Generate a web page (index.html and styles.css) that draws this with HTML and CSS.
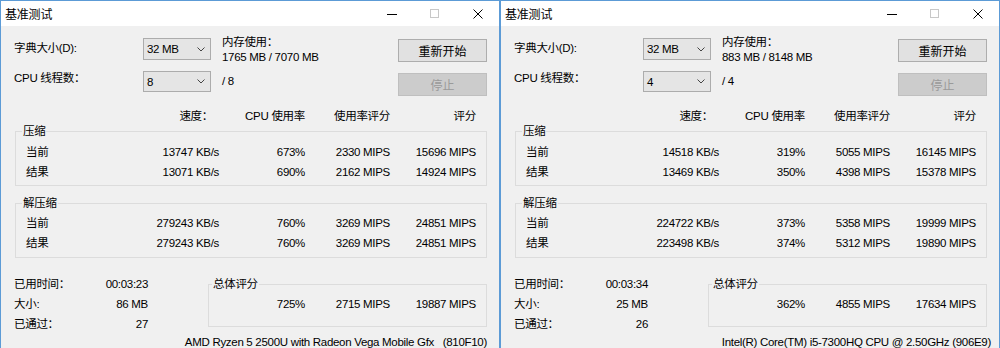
FILE: index.html
```html
<!DOCTYPE html>
<html lang="zh-CN">
<head>
    <meta charset="UTF-8">
    <title>基准测试</title>
    <link rel="stylesheet" href="styles.css">
</head>
<body>
<div class="desk">

    <section class="window">
        <header class="titlebar">
            <span class="title">基准测试</span>
            <div class="caption">
                <span class="cap"><svg width="10" height="10" viewBox="0 0 10 10"><line x1="0" y1="5.5" x2="10" y2="5.5" stroke="#000" stroke-width="1"/></svg></span>
                <span class="cap"><svg width="10" height="10" viewBox="0 0 10 10"><rect x="0.5" y="0.5" width="8" height="8" fill="none" stroke="#c8c8c8" stroke-width="1"/></svg></span>
                <span class="cap"><svg width="10" height="10" viewBox="0 0 10 10"><path d="M0.5 0.5 L9.5 9.5 M9.5 0.5 L0.5 9.5" stroke="#000" stroke-width="1"/></svg></span>
            </div>
        </header>
        <div class="client">
            <div class="settings">
                <span class="lbl lbl-dict">字典大小(D):</span>
                <div class="combo"><span>32 MB</span><svg width="8" height="5" viewBox="0 0 8 5"><polyline points="0.5,0.5 4,4 7.5,0.5" fill="none" stroke="#444" stroke-width="1"/></svg></div>
                <div class="mem"><div>内存使用：</div><div>1765 MB / 7070 MB</div></div>
                <button class="btn btn-restart">重新开始</button>

                <span class="lbl lbl-threads">CPU 线程数：</span>
                <div class="combo combo-threads"><span>8</span><svg width="8" height="5" viewBox="0 0 8 5"><polyline points="0.5,0.5 4,4 7.5,0.5" fill="none" stroke="#444" stroke-width="1"/></svg></div>
                <div class="threads">/ 8</div>
                <button class="btn btn-stop" disabled>停止</button>
            </div>

            <div class="cols head">
                <span></span><span class="speed-h">速度：</span><span>CPU 使用率</span><span>使用率评分</span><span>评分</span>
            </div>

            <fieldset class="group">
                <legend>压缩</legend>
                <div class="cols"><span>当前</span><span>13747 KB/s</span><span>673%</span><span>2330 MIPS</span><span>15696 MIPS</span></div>
                <div class="cols"><span>结果</span><span>13071 KB/s</span><span>690%</span><span>2162 MIPS</span><span>14924 MIPS</span></div>
            </fieldset>

            <fieldset class="group group-decomp">
                <legend>解压缩</legend>
                <div class="cols"><span>当前</span><span>279243 KB/s</span><span>760%</span><span>3269 MIPS</span><span>24851 MIPS</span></div>
                <div class="cols"><span>结果</span><span>279243 KB/s</span><span>760%</span><span>3269 MIPS</span><span>24851 MIPS</span></div>
            </fieldset>

            <div class="summary">
                <div class="stats">
                    <span>已用时间：</span><span class="num">00:03:23</span>
                    <span>大小:</span><span class="num">86 MB</span>
                    <span>已通过：</span><span class="num">27</span>
                </div>
                <fieldset class="group total">
                    <legend>总体评分</legend>
                    <div class="total-cols"><span>725%</span><span>2715 MIPS</span><span>19887 MIPS</span></div>
                </fieldset>
            </div>

            <div class="cpu-name">AMD Ryzen 5 2500U with Radeon Vega Mobile Gfx   (810F10)</div>
        </div>
    </section>

    <section class="window">
        <header class="titlebar">
            <span class="title">基准测试</span>
            <div class="caption">
                <span class="cap"><svg width="10" height="10" viewBox="0 0 10 10"><line x1="0" y1="5.5" x2="10" y2="5.5" stroke="#000" stroke-width="1"/></svg></span>
                <span class="cap"><svg width="10" height="10" viewBox="0 0 10 10"><rect x="0.5" y="0.5" width="8" height="8" fill="none" stroke="#c8c8c8" stroke-width="1"/></svg></span>
                <span class="cap"><svg width="10" height="10" viewBox="0 0 10 10"><path d="M0.5 0.5 L9.5 9.5 M9.5 0.5 L0.5 9.5" stroke="#000" stroke-width="1"/></svg></span>
            </div>
        </header>
        <div class="client">
            <div class="settings">
                <span class="lbl lbl-dict">字典大小(D):</span>
                <div class="combo"><span>32 MB</span><svg width="8" height="5" viewBox="0 0 8 5"><polyline points="0.5,0.5 4,4 7.5,0.5" fill="none" stroke="#444" stroke-width="1"/></svg></div>
                <div class="mem"><div>内存使用：</div><div>883 MB / 8148 MB</div></div>
                <button class="btn btn-restart">重新开始</button>

                <span class="lbl lbl-threads">CPU 线程数：</span>
                <div class="combo combo-threads"><span>4</span><svg width="8" height="5" viewBox="0 0 8 5"><polyline points="0.5,0.5 4,4 7.5,0.5" fill="none" stroke="#444" stroke-width="1"/></svg></div>
                <div class="threads">/ 4</div>
                <button class="btn btn-stop" disabled>停止</button>
            </div>

            <div class="cols head">
                <span></span><span class="speed-h">速度：</span><span>CPU 使用率</span><span>使用率评分</span><span>评分</span>
            </div>

            <fieldset class="group">
                <legend>压缩</legend>
                <div class="cols"><span>当前</span><span>14518 KB/s</span><span>319%</span><span>5055 MIPS</span><span>16145 MIPS</span></div>
                <div class="cols"><span>结果</span><span>13469 KB/s</span><span>350%</span><span>4398 MIPS</span><span>15378 MIPS</span></div>
            </fieldset>

            <fieldset class="group group-decomp">
                <legend>解压缩</legend>
                <div class="cols"><span>当前</span><span>224722 KB/s</span><span>373%</span><span>5358 MIPS</span><span>19999 MIPS</span></div>
                <div class="cols"><span>结果</span><span>223498 KB/s</span><span>374%</span><span>5312 MIPS</span><span>19890 MIPS</span></div>
            </fieldset>

            <div class="summary">
                <div class="stats">
                    <span>已用时间：</span><span class="num">00:03:34</span>
                    <span>大小:</span><span class="num">25 MB</span>
                    <span>已通过：</span><span class="num">26</span>
                </div>
                <fieldset class="group total">
                    <legend>总体评分</legend>
                    <div class="total-cols"><span>362%</span><span>4855 MIPS</span><span>17634 MIPS</span></div>
                </fieldset>
            </div>

            <div class="cpu-name cpu-intel">Intel(R) Core(TM) i5-7300HQ CPU @ 2.50GHz (906E9)</div>
        </div>
    </section>

</div>
</body>
</html>
```

FILE: styles.css
```css
html, body {
    margin: 0;
    padding: 0;
    overflow: hidden;
}

body {
    font-family: "Liberation Sans", "Noto Sans CJK SC", sans-serif;
    font-size: 11.5px;
    letter-spacing: -0.3px;
    color: #000;
    background-color: #6ea6da;
}

.desk {
    display: flex;
    width: 1000px;
    height: 348px;
    overflow: hidden;
}

.window {
    box-sizing: border-box;
    width: 500px;
    height: 348px;
    overflow: hidden;
    border: 1px solid #5c9bd6;
    border-bottom: none;
    background-color: #f0f0f0;
}

.titlebar {
    display: flex;
    align-items: center;
    justify-content: space-between;
    height: 25px;
    padding-left: 4px;
    background-color: #fff;
}

.title {
    font-size: 12px;
    letter-spacing: -0.2px;
}

.caption {
    display: flex;
    height: 100%;
}

.cap {
    display: flex;
    align-items: center;
    justify-content: center;
    width: 43px;
}

.client {
    padding: 0 12px 0 13px;
}

/* top area: dictionary, threads, buttons */
.settings {
    display: grid;
    grid-template-columns: 129px 68px 187px 89px;
    grid-template-rows: 24px 25px;
    row-gap: 9px;
    margin-top: 12px;
}

.lbl {
    line-height: 15px;
    align-self: start;
}

.lbl-dict {
    margin-top: 3px;
}

.lbl-threads {
    margin-top: 0;
}

.combo {
    box-sizing: border-box;
    display: flex;
    align-items: center;
    justify-content: space-between;
    height: 22px;
    padding: 0 5px 0 3px;
    border: 1px solid #acacac;
    background-color: #e5e5e5;
    align-self: start;
}

.combo-threads {
    height: 21px;
}

.mem {
    padding-left: 11px;
    line-height: 15px;
    margin-top: -3px;
}

.threads {
    padding-left: 11px;
    line-height: 15px;
    margin-top: 3px;
}

.btn {
    box-sizing: border-box;
    height: 23px;
    padding: 0;
    border: 1px solid #adadad;
    background-color: #e1e1e1;
    font-family: inherit;
    font-size: 12px;
    letter-spacing: 0;
    color: #000;
    align-self: start;
}

.btn-restart {
    margin-top: 1px;
}

.btn-stop {
    margin-top: 2px;
    border-color: #bfbfbf;
    background-color: #cccccc;
    color: #9a9a9a;
}

/* result tables */
.cols {
    display: grid;
    grid-template-columns: 100px 93px 86px 85px 86px;
    line-height: 20px;
}

.cols span {
    text-align: right;
    white-space: nowrap;
}

.cols span:first-child {
    text-align: left;
}

.head {
    margin: 13px 0 0 1px;
    padding: 0 11px;
    line-height: 15px;
}

.speed-h {
    padding-right: 6px;
}

.group {
    margin: 0 0 0 1px;
    padding: 2.5px 10px 3.5px 10px;
    border: 1px solid #dcdcdc;
    min-width: 0;
}

.group legend {
    margin-left: -4px;
    padding: 0 1px;
    line-height: 15px;
}

.group-decomp {
    margin-top: 9.5px;
}

/* bottom summary */
.summary {
    display: flex;
    align-items: flex-start;
    margin-top: 16px;
}

.stats {
    display: grid;
    grid-template-columns: 1fr auto;
    width: 134px;
    line-height: 20px;
}

.num {
    text-align: right;
}

.total {
    flex: 1;
    margin: 3.5px 0 0 60px;
    padding: 1.5px 10px 12px 0;
}

.total legend {
    margin-left: 3px;
}

.total-cols {
    display: grid;
    grid-template-columns: 96px 85px 86px;
    line-height: 20px;
}

.total-cols span {
    text-align: right;
}

.cpu-name {
    margin-top: 1.5px;
    line-height: 15px;
    text-align: right;
    white-space: pre;
}

.cpu-intel {
    margin-right: -4px;
}
```
